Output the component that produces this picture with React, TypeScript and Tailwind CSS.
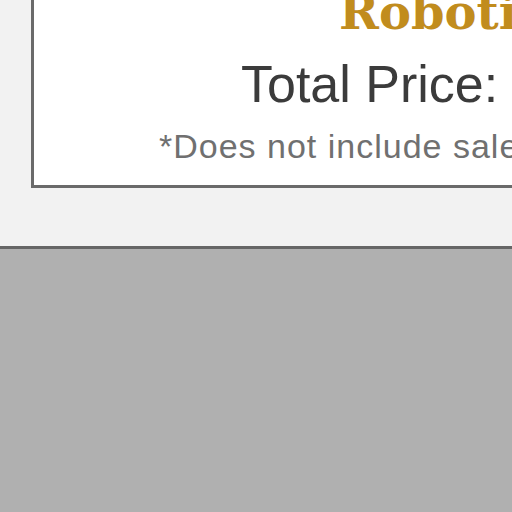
export default function App() {
  return (
    <div className="flex h-[512px] w-[512px] flex-col overflow-hidden bg-[#b0b0b0]">
      {/* Price summary panel */}
      <section className="shrink-0 bg-[#f2f2f2] pb-[58px]">
        <div className="-mt-[12px] ml-[31px] w-[700px] border-[3px] border-t-0 border-[#6a6a6a] bg-white pb-[21px]">
          <div
            className="whitespace-nowrap pl-[305px] text-[48px] font-bold leading-[48px] text-[#c18c1d]"
            style={{ fontFamily: '"DejaVu Serif", serif' }}
          >
            Robotics Kit
          </div>
          <div
            className="mt-[18px] whitespace-nowrap pl-[207px] text-[52px] leading-[60px] text-[#3b3b3b]"
            style={{ fontFamily: '"Liberation Sans", Arial, sans-serif' }}
          >
            Total Price: $0.00
          </div>
          <div
            className="mt-[14px] whitespace-nowrap pl-[125px] text-[34px] leading-[36px] tracking-[1px] text-[#707070]"
            style={{ fontFamily: '"Liberation Sans", Arial, sans-serif' }}
          >
            *Does not include sales tax
          </div>
        </div>
      </section>
      <div className="h-[3px] shrink-0 bg-[#666666]" />
      <div className="flex-1 bg-[#b0b0b0]" />
    </div>
  );
}
